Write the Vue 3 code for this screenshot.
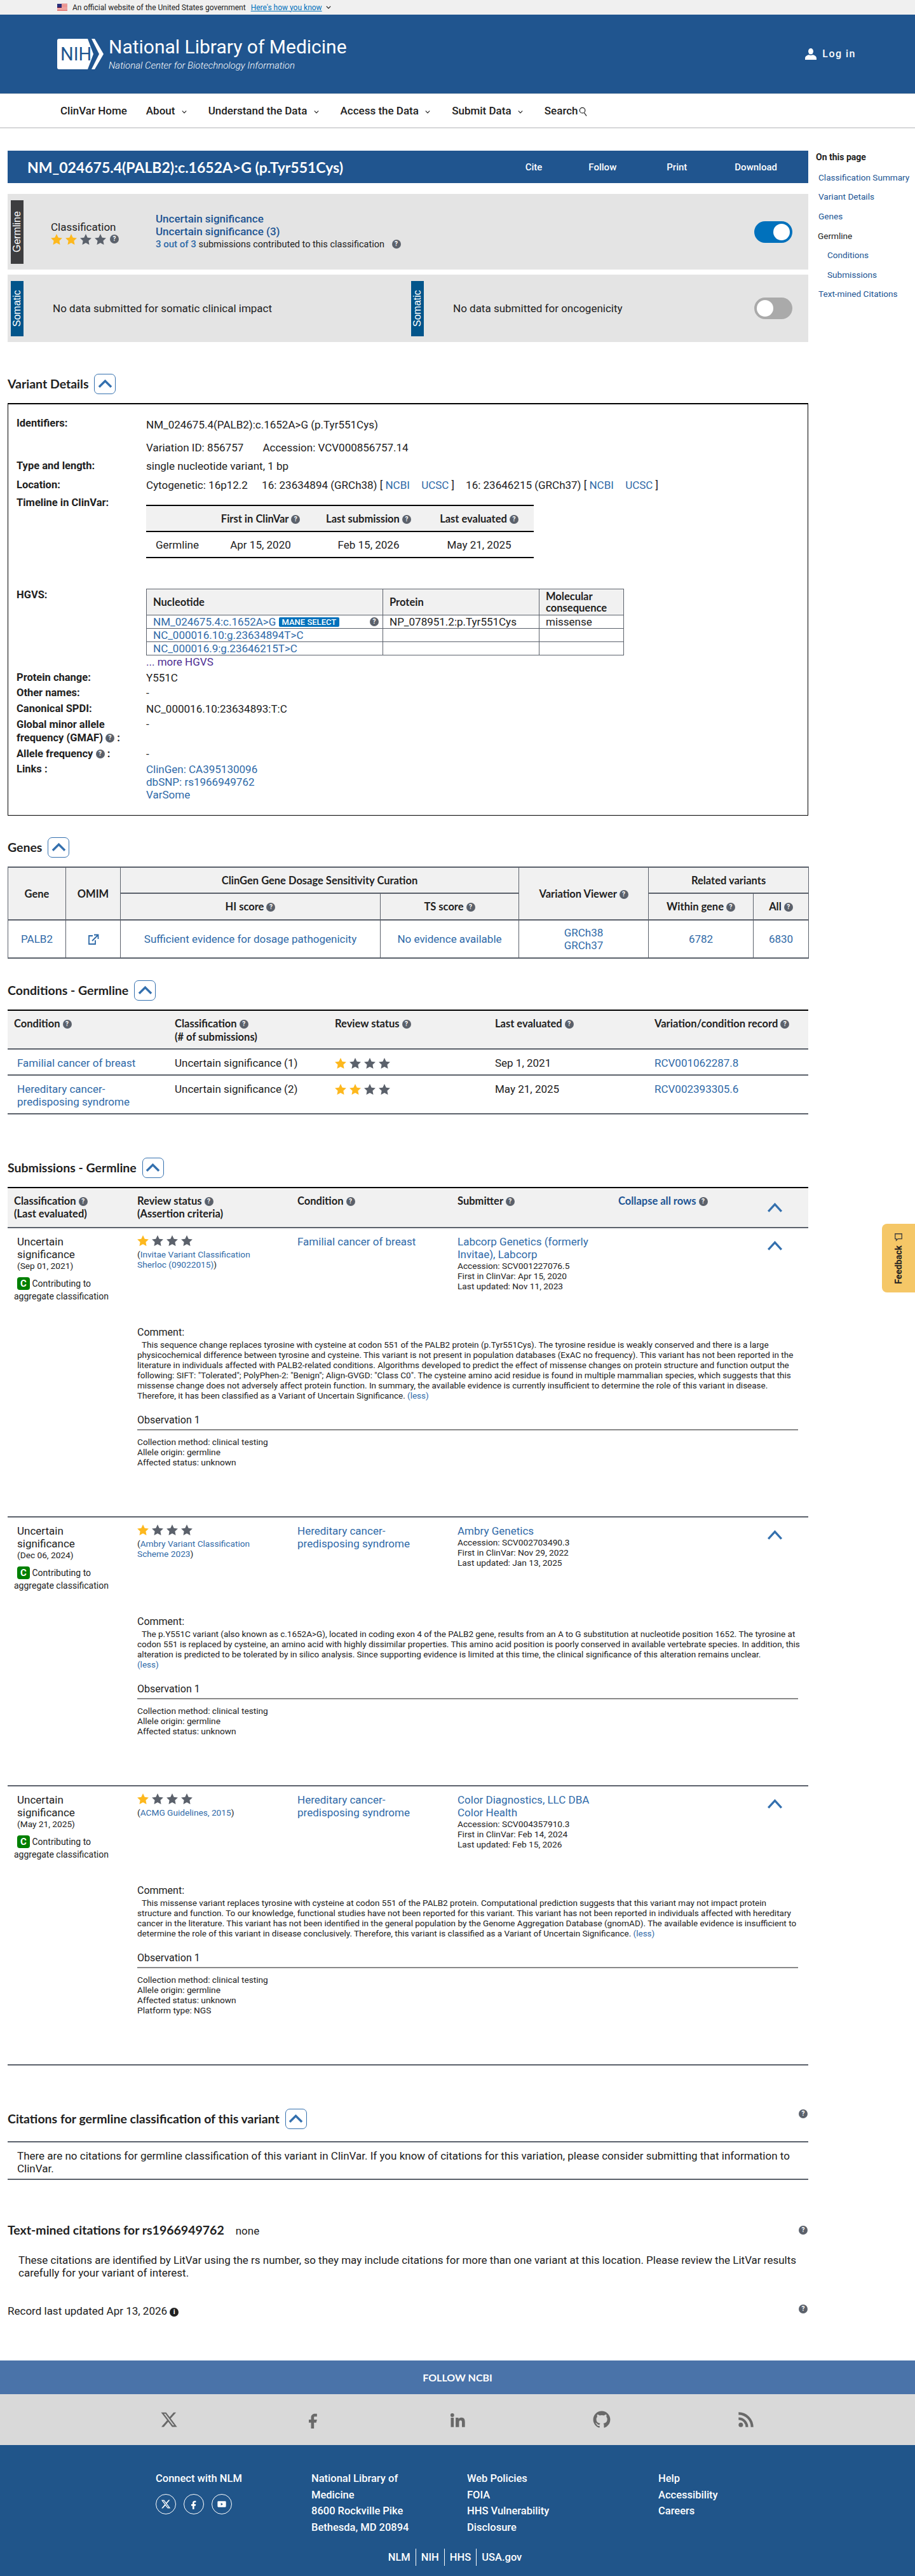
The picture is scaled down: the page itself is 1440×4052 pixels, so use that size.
<template>
  <div class="page">
    <!-- Government banner -->
    <div class="gov-banner">
      <svg class="flag" viewBox="0 0 16 11" width="16" height="11">
        <rect width="16" height="11" fill="#fff" />
        <path d="M0 .5h16M0 2.5h16M0 4.5h16M0 6.5h16M0 8.5h16M0 10.5h16" stroke="#d83933" stroke-width="1" />
        <rect width="7" height="6" fill="#2a2f7a" />
      </svg>
      <span>An official website of the United States government</span>
      <a class="how" href="#">Here's how you know</a>
      <svg class="chev-sm" viewBox="0 0 10 6" width="8" height="5"><path d="M1 1l4 4 4-4" /></svg>
    </div>

    <!-- Header -->
    <header class="site-header">
      <div class="brand">
        <svg class="nih" viewBox="0 0 73 48" width="73" height="48">
          <path d="M3 0h45l9 24-9 24H3a3 3 0 0 1-3-3V3a3 3 0 0 1 3-3z" fill="#fff" />
          <path d="M54 0h5l14 24-14 24h-5l12-24z" fill="#fff" />
          <text x="5" y="34" class="nih-text">NIH</text>
        </svg>
        <div>
          <div class="brand-title">National Library of Medicine</div>
          <div class="brand-sub">National Center for Biotechnology Information</div>
        </div>
      </div>
      <a class="login" href="#">
        <svg viewBox="0 0 18 18" width="18" height="18" fill="#fff">
          <ellipse cx="9" cy="4.8" rx="4" ry="4.8" />
          <path d="M0 18v-2.5C0 12.4 3.4 10.6 6 10.2c1.8 1 4.2 1 6 0 2.6.4 6 2.2 6 5.3V18z" />
        </svg>
        <span>Log in</span>
      </a>
    </header>

    <!-- Nav -->
    <nav class="site-nav">
      <a href="#" class="nav-home">ClinVar Home</a>
      <a v-for="item in navItems" :key="item" href="#">
        {{ item }}
        <svg class="chev-nav" viewBox="0 0 10 6" width="8" height="6"><path d="M1 1l4 4 4-4" /></svg>
      </a>
      <a href="#" class="nav-search">
        Search<svg viewBox="0 0 14 16" width="13" height="15" fill="none" stroke="#212121" stroke-width="1.3">
          <circle cx="6" cy="6" r="4.6" />
          <path d="M9 10l4 5.5" />
        </svg>
      </a>
    </nav>

    <div class="layout">
      <main class="main">
        <div class="title-bar">
          <h1>NM_024675.4(PALB2):c.1652A&gt;G (p.Tyr551Cys)</h1>
          <div class="title-actions">
            <a href="#" class="act-cite">Cite</a>
            <a href="#" class="act-follow">Follow</a>
            <a href="#" class="act-print">Print</a>
            <a href="#" class="act-download">Download</a>
          </div>
        </div>

        <!-- Classification summary -->
        <section class="panel germline">
          <div class="side-tag dark">Germline</div>
          <div class="cls">
            <div class="cls-label">Classification</div>
            <div class="cls-stars">
              <span class="stars">
                <svg v-for="n in 4" :key="n" viewBox="0 0 20 19" :class="n <= 2 ? 'on' : 'off'"><path :d="starPath" /></svg>
              </span>
              <span class="help">?</span>
            </div>
          </div>
          <div class="cls-detail">
            <a href="#" class="strong-link">Uncertain significance</a>
            <a href="#" class="strong-link">Uncertain significance (3)</a>
            <div class="cls-count">
              <a href="#">3 out of 3</a> submissions contributed to this classification
              <span class="help gap-help">?</span>
            </div>
          </div>
          <div class="toggle on"><span></span></div>
        </section>

        <section class="panel somatic">
          <div class="half">
            <div class="side-tag teal">Somatic</div>
            <p>No data submitted for somatic clinical impact</p>
          </div>
          <div class="half">
            <div class="side-tag teal">Somatic</div>
            <p>No data submitted for oncogenicity</p>
            <div class="toggle"><span></span></div>
          </div>
        </section>

        <!-- Variant details -->
        <div class="sec-head first">
          <h2>Variant Details</h2>
          <button class="collapse" type="button"><svg viewBox="0 0 24 14"><path d="M2 12L12 2l10 10" /></svg></button>
        </div>
        <div class="details-box">
          <div class="row row-ident">
            <div class="lbl">Identifiers:</div>
            <div class="val">
              <div>NM_024675.4(PALB2):c.1652A&gt;G (p.Tyr551Cys)</div>
              <div class="val-gap">Variation ID: 856757 <span class="accession">Accession: VCV000856757.14</span></div>
            </div>
          </div>
          <div class="row row-type">
            <div class="lbl">Type and length:</div>
            <div class="val">single nucleotide variant, 1 bp</div>
          </div>
          <div class="row row-loc">
            <div class="lbl">Location:</div>
            <div class="val">
              Cytogenetic: 16p12.2 <span class="loc-part">16: 23634894 (GRCh38) [ <a href="#">NCBI</a> <a href="#" class="ucsc">UCSC</a> ]</span>
              <span class="loc-part">16: 23646215 (GRCh37) [ <a href="#">NCBI</a> <a href="#" class="ucsc">UCSC</a> ]</span>
            </div>
          </div>
          <div class="row row-time">
            <div class="lbl">Timeline in ClinVar:</div>
            <div class="val">
              <table class="timeline">
                <thead>
                  <tr>
                    <th class="t1"></th>
                    <th class="t2">First in ClinVar <span class="help">?</span></th>
                    <th class="t3">Last submission <span class="help">?</span></th>
                    <th class="t4">Last evaluated <span class="help">?</span></th>
                  </tr>
                </thead>
                <tbody>
                  <tr>
                    <td class="left">Germline</td>
                    <td>Apr 15, 2020</td>
                    <td>Feb 15, 2026</td>
                    <td>May 21, 2025</td>
                  </tr>
                </tbody>
              </table>
            </div>
          </div>
          <div class="row row-hgvs">
            <div class="lbl">HGVS:</div>
            <div class="val">
              <table class="hgvs">
                <thead>
                  <tr>
                    <th class="col-nuc">Nucleotide</th>
                    <th class="col-prot">Protein</th>
                    <th>Molecular consequence</th>
                  </tr>
                </thead>
                <tbody>
                  <tr>
                    <td>
                      <div class="hgvs-main">
                        <span><a href="#">NM_024675.4:c.1652A&gt;G</a> <span class="mane">MANE SELECT</span></span>
                        <span class="help">?</span>
                      </div>
                    </td>
                    <td>NP_078951.2:p.Tyr551Cys</td>
                    <td>missense</td>
                  </tr>
                  <tr><td><a href="#">NC_000016.10:g.23634894T&gt;C</a></td><td></td><td></td></tr>
                  <tr><td><a href="#">NC_000016.9:g.23646215T&gt;C</a></td><td></td><td></td></tr>
                </tbody>
              </table>
              <a href="#" class="more">... more HGVS</a>
            </div>
          </div>
          <div class="row tight">
            <div class="lbl">Protein change:</div>
            <div class="val">Y551C</div>
          </div>
          <div class="row tight">
            <div class="lbl">Other names:</div>
            <div class="val">-</div>
          </div>
          <div class="row tight">
            <div class="lbl">Canonical SPDI:</div>
            <div class="val">NC_000016.10:23634893:T:C</div>
          </div>
          <div class="row tight">
            <div class="lbl lbl-wrap">Global minor allele frequency (GMAF) <span class="help">?</span> :</div>
            <div class="val">-</div>
          </div>
          <div class="row tight">
            <div class="lbl">Allele frequency <span class="help">?</span> :</div>
            <div class="val">-</div>
          </div>
          <div class="row tight">
            <div class="lbl">Links :</div>
            <div class="val links">
              <a href="#">ClinGen: CA395130096</a>
              <a href="#">dbSNP: rs1966949762</a>
              <a href="#">VarSome</a>
            </div>
          </div>
        </div>

        <!-- Genes -->
        <div class="sec-head">
          <h2>Genes</h2>
          <button class="collapse" type="button"><svg viewBox="0 0 24 14"><path d="M2 12L12 2l10 10" /></svg></button>
        </div>
        <table class="genes">
          <colgroup>
            <col class="g1" />
            <col class="g2" />
            <col class="g3" />
            <col class="g4" />
            <col class="g5" />
            <col class="g6" />
            <col class="g7" />
          </colgroup>
          <thead>
            <tr class="g-r1">
              <th rowspan="2">Gene</th>
              <th rowspan="2">OMIM</th>
              <th colspan="2">ClinGen Gene Dosage Sensitivity Curation</th>
              <th rowspan="2">Variation Viewer <span class="help">?</span></th>
              <th colspan="2">Related variants</th>
            </tr>
            <tr class="g-r2">
              <th>HI score <span class="help">?</span></th>
              <th>TS score <span class="help">?</span></th>
              <th>Within gene <span class="help">?</span></th>
              <th>All <span class="help">?</span></th>
            </tr>
          </thead>
          <tbody>
            <tr class="g-r3">
              <td><a href="#">PALB2</a></td>
              <td>
                <svg class="ext" viewBox="0 0 18 17" width="18" height="17" fill="none" stroke="#2f6aa8" stroke-width="1.8">
                  <path d="M8 3H2v13h10v-6" />
                  <path d="M7 11L16 2M10 1.5h6.5V8" />
                </svg>
              </td>
              <td><a href="#">Sufficient evidence for dosage pathogenicity</a></td>
              <td><a href="#">No evidence available</a></td>
              <td class="stack"><a href="#">GRCh38</a><a href="#">GRCh37</a></td>
              <td><a href="#">6782</a></td>
              <td><a href="#">6830</a></td>
            </tr>
          </tbody>
        </table>

        <!-- Conditions -->
        <div class="sec-head">
          <h2>Conditions - Germline</h2>
          <button class="collapse" type="button"><svg viewBox="0 0 24 14"><path d="M2 12L12 2l10 10" /></svg></button>
        </div>
        <div class="cond-table">
          <div class="cond-row cond-head">
            <div>Condition <span class="help">?</span></div>
            <div>Classification <span class="help">?</span><br />(# of submissions)</div>
            <div>Review status <span class="help">?</span></div>
            <div>Last evaluated <span class="help">?</span></div>
            <div>Variation/condition record <span class="help">?</span></div>
          </div>
          <div v-for="c in conditions" :key="c.record" class="cond-row">
            <div class="cond-name"><a href="#">{{ c.name }}</a></div>
            <div>{{ c.classification }}</div>
            <div>
              <span class="stars cond-stars">
                <svg v-for="n in 4" :key="n" viewBox="0 0 20 19" :class="n <= c.stars ? 'on' : 'off'"><path :d="starPath" /></svg>
              </span>
            </div>
            <div>{{ c.evaluated }}</div>
            <div><a href="#">{{ c.record }}</a></div>
          </div>
        </div>

        <!-- Submissions -->
        <div class="sec-head wide">
          <h2>Submissions - Germline</h2>
          <button class="collapse" type="button"><svg viewBox="0 0 24 14"><path d="M2 12L12 2l10 10" /></svg></button>
        </div>
        <div class="sub-table">
          <div class="sub-grid sub-head">
            <div>Classification <span class="help">?</span><br />(Last evaluated)</div>
            <div>Review status <span class="help">?</span><br />(Assertion criteria)</div>
            <div>Condition <span class="help">?</span></div>
            <div>Submitter <span class="help">?</span></div>
            <div><a href="#">Collapse all rows</a> <span class="help">?</span></div>
            <div class="chev-cell"><svg class="chev-big" viewBox="0 0 26 16"><path d="M2 14.5L13 2.5l11 12" /></svg></div>
          </div>
          <article v-for="s in submissions" :key="s.accession" class="sub-row">
            <div class="sub-grid sub-top">
              <div class="sub-cls">
                <div class="sub-sig">Uncertain significance</div>
                <div class="small">({{ s.date }})</div>
                <div class="contrib"><span class="c-badge">C</span> Contributing to aggregate classification</div>
              </div>
              <div>
                <span class="stars">
                  <svg v-for="n in 4" :key="n" viewBox="0 0 20 19" :class="n === 1 ? 'on' : 'off'"><path :d="starPath" /></svg>
                </span>
                <div class="small criteria">(<a href="#">{{ s.criteria }}</a>)</div>
              </div>
              <div class="sub-link"><a href="#">{{ s.condition }}</a></div>
              <div>
                <div class="sub-link"><a href="#">{{ s.submitter }}</a></div>
                <div class="small">Accession: {{ s.accession }}</div>
                <div class="small">First in ClinVar: {{ s.first }}</div>
                <div class="small">Last updated: {{ s.updated }}</div>
              </div>
              <div></div>
              <div class="chev-cell"><svg class="chev-big" viewBox="0 0 26 16"><path d="M2 14.5L13 2.5l11 12" /></svg></div>
            </div>
            <div class="sub-more">
              <div class="comment-title">Comment:</div>
              <p class="comment">{{ s.comment }} <br v-if="s.lessOnNewLine" /><a href="#">(less)</a></p>
              <div class="obs-title">Observation 1</div>
              <div class="obs-list">
                <div v-for="line in s.observation" :key="line">{{ line }}</div>
              </div>
            </div>
          </article>
        </div>

        <!-- Citations -->
        <div class="sec-head wide with-help">
          <div class="sec-left">
            <h2>Citations for germline classification of this variant</h2>
            <button class="collapse" type="button"><svg viewBox="0 0 24 14"><path d="M2 12L12 2l10 10" /></svg></button>
          </div>
          <span class="help help-up">?</span>
        </div>
        <div class="no-cite">
          There are no citations for germline classification of this variant in ClinVar. If you know of citations for this variation, please consider submitting that information to ClinVar.
        </div>

        <div class="mined-head">
          <div><h2>Text-mined citations for rs1966949762</h2><span class="none">none</span></div>
          <span class="help">?</span>
        </div>
        <p class="mined-text">
          These citations are identified by LitVar using the rs number, so they may include citations for more than one variant at this location. Please review the LitVar results carefully for your variant of interest.
        </p>
        <div class="record">
          <div>Record last updated Apr 13, 2026 <span class="info">i</span></div>
          <span class="help">?</span>
        </div>
      </main>

      <aside class="toc">
        <div class="toc-title">On this page</div>
        <a href="#">Classification Summary</a>
        <a href="#">Variant Details</a>
        <a href="#">Genes</a>
        <div class="toc-plain">Germline</div>
        <a href="#" class="indent">Conditions</a>
        <a href="#" class="indent">Submissions</a>
        <a href="#">Text-mined Citations</a>
      </aside>
    </div>

    <!-- Follow NCBI -->
    <footer>
      <div class="follow-title">FOLLOW NCBI</div>
      <div class="follow-icons">
        <a href="#"><svg viewBox="0 0 24 24"><path :d="xPath" /></svg></a>
        <a href="#"><svg viewBox="0 0 24 24"><path :d="fbPath" /></svg></a>
        <a href="#"><svg viewBox="0 0 24 24"><path d="M4.98 3.5a2.5 2.5 0 1 1 0 5 2.5 2.5 0 0 1 0-5zM3 9.5h4V22H3zM9.5 9.5h3.8v1.7c.6-1 1.9-2 3.9-2 4.1 0 4.8 2.7 4.8 6.2V22h-4v-5.9c0-1.3 0-3-1.8-3s-2.1 1.4-2.1 2.9v6H9.5z" /></svg></a>
        <a href="#"><svg viewBox="0 0 24 24"><path :d="githubPath" /></svg></a>
        <a href="#"><svg viewBox="0 0 24 24"><circle cx="5" cy="19" r="3" /><path d="M2 9v3.5a9.5 9.5 0 0 1 9.5 9.5H15A13 13 0 0 0 2 9zM2 2v3.5A16.5 16.5 0 0 1 18.5 22H22A20 20 0 0 0 2 2z" /></svg></a>
      </div>
      <div class="foot-main">
        <div class="foot-cols">
          <div>
            <div>Connect with NLM</div>
            <div class="foot-social">
              <a href="#"><svg viewBox="0 0 24 24"><path :d="xPath" /></svg></a>
              <a href="#"><svg viewBox="0 0 24 24"><path :d="fbPath" /></svg></a>
              <a href="#"><svg viewBox="0 0 24 24"><path d="M4 5h16a2 2 0 0 1 2 2v10a2 2 0 0 1-2 2H4a2 2 0 0 1-2-2V7a2 2 0 0 1 2-2zm6 4v6l5-3z" fill-rule="evenodd" /></svg></a>
            </div>
          </div>
          <div class="addr">National Library of Medicine<br />8600 Rockville Pike<br />Bethesda, MD 20894</div>
          <div class="foot-links narrow">
            <a href="#">Web Policies</a>
            <a href="#">FOIA</a>
            <a href="#">HHS Vulnerability Disclosure</a>
          </div>
          <div class="foot-links">
            <a href="#">Help</a>
            <a href="#">Accessibility</a>
            <a href="#">Careers</a>
          </div>
        </div>
        <div class="foot-bottom">
          <a href="#">NLM</a>
          <a href="#">NIH</a>
          <a href="#">HHS</a>
          <a href="#">USA.gov</a>
        </div>
      </div>
    </footer>

    <!-- Feedback tab floats over the page edge -->
    <button class="feedback" type="button">
      <svg viewBox="0 0 16 16" width="14" height="14" fill="none" stroke="#3d3d3d" stroke-width="1.5">
        <path d="M2 2h12v9H7l-3 3v-3H2z" />
      </svg>
      <span>Feedback</span>
    </button>
  </div>
</template>

<script setup>
const starPath = 'M10 0l3 6.3 7 .9-5.1 4.8 1.3 7L10 15.6 3.8 19l1.3-7L0 7.2l7-.9z'
const xPath = 'M18.244 2.25h3.308l-7.227 8.26 8.502 11.24H16.17l-5.214-6.817L4.99 21.75H1.68l7.73-8.835L1.254 2.25H8.08l4.713 6.231zm-1.161 17.52h1.833L7.084 4.126H5.117z'
const fbPath = 'M14 8h3V4h-3c-2.8 0-5 2.2-5 5v3H6v4h3v8h4v-8h3l1-4h-4V9c0-.6.4-1 1-1z'
const githubPath = 'M12 .5C5.65.5.5 5.65.5 12c0 5.09 3.29 9.4 7.86 10.93.58.1.79-.25.79-.56v-2c-3.2.7-3.87-1.54-3.87-1.54-.52-1.33-1.28-1.69-1.28-1.69-1.05-.72.08-.7.08-.7 1.16.08 1.77 1.19 1.77 1.19 1.03 1.76 2.7 1.25 3.36.96.1-.75.4-1.25.73-1.54-2.55-.29-5.24-1.28-5.24-5.69 0-1.26.45-2.29 1.19-3.1-.12-.29-.52-1.46.11-3.05 0 0 .97-.31 3.17 1.18a11 11 0 0 1 5.78 0c2.2-1.49 3.17-1.18 3.17-1.18.63 1.59.23 2.76.11 3.05.74.81 1.19 1.84 1.19 3.1 0 4.42-2.69 5.39-5.25 5.68.41.36.78 1.06.78 2.14v3.17c0 .31.21.67.8.56A11.5 11.5 0 0 0 23.5 12C23.5 5.65 18.35.5 12 .5z'

const navItems = ['About', 'Understand the Data', 'Access the Data', 'Submit Data']

const conditions = [
  {
    name: 'Familial cancer of breast',
    classification: 'Uncertain significance (1)',
    stars: 1,
    evaluated: 'Sep 1, 2021',
    record: 'RCV001062287.8',
  },
  {
    name: 'Hereditary cancer-predisposing syndrome',
    classification: 'Uncertain significance (2)',
    stars: 2,
    evaluated: 'May 21, 2025',
    record: 'RCV002393305.6',
  },
]

const baseObservation = ['Collection method: clinical testing', 'Allele origin: germline', 'Affected status: unknown']

const submissions = [
  {
    date: 'Sep 01, 2021',
    criteria: 'Invitae Variant Classification Sherloc (09022015)',
    condition: 'Familial cancer of breast',
    submitter: 'Labcorp Genetics (formerly Invitae), Labcorp',
    accession: 'SCV001227076.5',
    first: 'Apr 15, 2020',
    updated: 'Nov 11, 2023',
    comment:
      'This sequence change replaces tyrosine with cysteine at codon 551 of the PALB2 protein (p.Tyr551Cys). The tyrosine residue is weakly conserved and there is a large physicochemical difference between tyrosine and cysteine. This variant is not present in population databases (ExAC no frequency). This variant has not been reported in the literature in individuals affected with PALB2-related conditions. Algorithms developed to predict the effect of missense changes on protein structure and function output the following: SIFT: "Tolerated"; PolyPhen-2: "Benign"; Align-GVGD: "Class C0". The cysteine amino acid residue is found in multiple mammalian species, which suggests that this missense change does not adversely affect protein function. In summary, the available evidence is currently insufficient to determine the role of this variant in disease. Therefore, it has been classified as a Variant of Uncertain Significance.',
    observation: baseObservation,
  },
  {
    date: 'Dec 06, 2024',
    criteria: 'Ambry Variant Classification Scheme 2023',
    condition: 'Hereditary cancer-predisposing syndrome',
    submitter: 'Ambry Genetics',
    accession: 'SCV002703490.3',
    first: 'Nov 29, 2022',
    updated: 'Jan 13, 2025',
    comment:
      'The p.Y551C variant (also known as c.1652A>G), located in coding exon 4 of the PALB2 gene, results from an A to G substitution at nucleotide position 1652. The tyrosine at codon 551 is replaced by cysteine, an amino acid with highly dissimilar properties. This amino acid position is poorly conserved in available vertebrate species. In addition, this alteration is predicted to be tolerated by in silico analysis. Since supporting evidence is limited at this time, the clinical significance of this alteration remains unclear.',
    lessOnNewLine: true,
    observation: baseObservation,
  },
  {
    date: 'May 21, 2025',
    criteria: 'ACMG Guidelines, 2015',
    condition: 'Hereditary cancer-predisposing syndrome',
    submitter: 'Color Diagnostics, LLC DBA Color Health',
    accession: 'SCV004357910.3',
    first: 'Feb 14, 2024',
    updated: 'Feb 15, 2026',
    comment:
      'This missense variant replaces tyrosine with cysteine at codon 551 of the PALB2 protein. Computational prediction suggests that this variant may not impact protein structure and function. To our knowledge, functional studies have not been reported for this variant. This variant has not been reported in individuals affected with hereditary cancer in the literature. This variant has not been identified in the general population by the Genome Aggregation Database (gnomAD). The available evidence is insufficient to determine the role of this variant in disease conclusively. Therefore, this variant is classified as a Variant of Uncertain Significance.',
    observation: [...baseObservation, 'Platform type: NGS'],
  },
]
</script>

<style>
body {
  margin: 0;
  background: #fff;
}
</style>

<style scoped>
.page {
  position: relative;
  width: 1440px;
  height: 4052px;
  overflow: hidden;
  font-family: Roboto, 'Liberation Sans', sans-serif;
  font-size: 17px;
  line-height: 20px;
  color: #212121;
}

a {
  color: #2f6aa8;
  text-decoration: none;
}

h1,
h2,
p {
  margin: 0;
}

/* Top bars */
.gov-banner {
  display: flex;
  align-items: center;
  height: 23px;
  padding-left: 90px;
  background: #f0f0f0;
  font-size: 12px;
  color: #212121;
}

.flag {
  margin-right: 8px;
}

.how {
  margin-left: 8px;
  color: #0071bc;
  text-decoration: underline;
}

.chev-sm {
  margin-left: 6px;
  fill: none;
  stroke: #212121;
  stroke-width: 1.6;
}

.site-header {
  display: flex;
  align-items: center;
  justify-content: space-between;
  box-sizing: border-box;
  height: 125px;
  padding: 0 93px 0 90px;
  background: #20558f;
  border-bottom: 1px solid #d6d7d9;
}

.brand {
  display: flex;
  align-items: center;
  gap: 8px;
  color: #fff;
}

.nih-text {
  font-family: Roboto, sans-serif;
  font-size: 29px;
  fill: #20558f;
}

.brand-title {
  font-size: 30px;
  line-height: 34px;
}

.brand-sub {
  margin-top: 2px;
  font-size: 15px;
  font-style: italic;
  font-weight: 300;
  line-height: 20px;
}

.login {
  display: flex;
  align-items: center;
  gap: 9px;
  color: #fff;
  font-size: 16px;
  font-weight: 500;
  letter-spacing: 1.5px;
}

.site-nav {
  display: flex;
  align-items: center;
  box-sizing: border-box;
  height: 54px;
  padding-left: 95px;
  border-bottom: 2px solid #d6d7d9;
}

.site-nav a {
  padding-right: 34px;
  color: #212121;
  font-weight: 500;
}

.site-nav .nav-home {
  padding-right: 30px;
}

.chev-nav {
  margin-left: 6px;
  fill: none;
  stroke: #212121;
  stroke-width: 1.4;
  vertical-align: middle;
}

.nav-search svg {
  margin-left: 1px;
  vertical-align: -3px;
}

.layout {
  display: flex;
}

.main {
  width: 1260px;
  margin-left: 12px;
  padding-top: 35px;
}

/* Title bar */
.title-bar {
  display: flex;
  align-items: center;
  height: 51px;
  padding-left: 31px;
  background: #20558f;
  color: #fff;
}

.title-bar h1 {
  font-family: Lato, sans-serif;
  font-size: 23px;
  font-weight: 700;
}

.title-actions {
  display: flex;
  flex: 1;
  height: 20px;
}

.title-actions a {
  color: #fff;
  font-size: 15px;
  font-weight: 500;
}

.act-cite {
  margin-left: auto;
}

.act-follow {
  margin-left: 73px;
}

.act-print {
  margin-left: 79px;
}

.act-download {
  margin-left: 75px;
  margin-right: 49px;
}

/* Classification panels */
.panel {
  display: flex;
  background: #e4e4e4;
}

.germline {
  align-items: center;
  height: 119px;
  margin-top: 17px;
}

.side-tag {
  display: flex;
  align-items: center;
  justify-content: center;
  flex: none;
  width: 20px;
  margin-left: 5px;
  font-family: 'Liberation Sans', Arial, sans-serif;
  font-size: 16px;
  color: #fff;
  writing-mode: vertical-rl;
  transform: rotate(180deg);
}

.side-tag.dark {
  height: 100px;
  background: #3d3d3f;
}

.side-tag.teal {
  height: 87px;
  background: #02558b;
}

.cls {
  width: 165px;
  margin-left: 43px;
  margin-top: 2px;
}

.cls-stars {
  display: flex;
  align-items: center;
  gap: 6px;
  margin-top: 1px;
}

.stars {
  display: inline-flex;
  gap: 5px;
  vertical-align: top;
}

.stars svg {
  width: 18px;
  height: 17px;
}

.stars .on {
  fill: #fdb81e;
}

.stars .off {
  fill: #5b616b;
}

.cond-stars {
  margin-top: 2px;
}

.help {
  display: inline-block;
  width: 14px;
  height: 14px;
  border-radius: 50%;
  background: #5b616b;
  color: #fff;
  font-family: Roboto, sans-serif;
  font-size: 10px;
  font-weight: 700;
  line-height: 14px;
  text-align: center;
  vertical-align: 2px;
}

.cls-detail {
  display: flex;
  flex-direction: column;
  flex: 1;
}

.strong-link {
  color: #205493;
  font-weight: 500;
}

.cls-count {
  font-size: 14.5px;
}

.cls-count a {
  font-size: 15px;
  font-weight: 500;
}

.gap-help {
  margin-left: 8px;
}

.toggle {
  position: relative;
  flex: none;
  width: 60px;
  height: 34px;
  margin-right: 25px;
  border-radius: 17px;
  background: #aaa;
}

.toggle span {
  position: absolute;
  top: 4px;
  left: 4px;
  width: 26px;
  height: 26px;
  border-radius: 50%;
  background: #fff;
}

.toggle.on {
  background: #0071bc;
}

.toggle.on span {
  left: 30px;
}

.somatic {
  align-items: center;
  height: 106px;
  margin-top: 8px;
}

.half {
  display: flex;
  align-items: center;
  width: 630px;
}

.half + .half {
  flex: 1;
}

.half p {
  flex: 1;
  margin-left: 46px;
}

/* Section headings */
.sec-head {
  display: flex;
  align-items: center;
  gap: 9px;
  height: 32px;
  margin-top: 34px;
  margin-bottom: 14px;
}

.sec-head.first {
  margin-top: 50px;
}

.sec-head.wide {
  margin-top: 68px;
}

.sec-head h2,
.mined-head h2 {
  font-family: Lato, sans-serif;
  font-size: 19.5px;
  font-weight: 700;
  line-height: 24px;
}

.collapse {
  display: flex;
  align-items: center;
  justify-content: center;
  box-sizing: border-box;
  width: 34px;
  height: 32px;
  padding: 0;
  border: 1px solid #3470ae;
  border-radius: 7px;
  background: #fff;
}

.collapse svg {
  width: 23px;
  height: 14px;
  fill: none;
  stroke: #3470ae;
  stroke-width: 3.5;
}

/* Variant details */
.details-box {
  box-sizing: border-box;
  height: 649px;
  padding-top: 20px;
  border: 1px solid #000;
  border-width: 2px 1px 1px 1px;
}

.row {
  display: grid;
  grid-template-columns: 204px 1fr;
  padding-left: 13px;
}

.lbl {
  font-size: 16.5px;
  font-weight: 700;
}

.lbl-wrap {
  width: 190px;
  line-height: 21px;
}

.row-ident .val {
  padding-top: 2px;
}

.val-gap {
  margin-top: 16px;
}

.accession {
  margin-left: 26px;
}

.row-type {
  margin-top: 9px;
}

.row-loc {
  margin-top: 10px;
}

.loc-part {
  margin-left: 18px;
}

.ucsc {
  margin-left: 14px;
}

.row-time {
  margin-top: 8px;
}

.timeline {
  width: 610px;
  margin-top: 13px;
  border-collapse: collapse;
  table-layout: fixed;
}

.timeline tr {
  height: 41px;
}

.timeline th,
.hgvs th,
.genes th,
.cond-head,
.sub-head {
  font-family: Lato, sans-serif;
  font-size: 16.5px;
  font-weight: 700;
}

.timeline th {
  padding: 0;
  background: #f1f1f1;
  border-top: 2px solid #000;
  border-bottom: 2px solid #000;
}

.timeline td {
  padding: 0;
  border-bottom: 2px solid #000;
  text-align: center;
}

.timeline td.left {
  padding-left: 15px;
  text-align: left;
}

.t1 {
  width: 98px;
}

.t2 {
  width: 164px;
}

.t3 {
  width: 176px;
}

.row-hgvs {
  margin-top: 48px;
}

.hgvs {
  width: 752px;
  border-collapse: collapse;
  table-layout: fixed;
}

.hgvs th,
.hgvs td {
  padding: 0 10px;
  border: 1px solid #5b616b;
  text-align: left;
}

.hgvs thead tr {
  height: 41px;
}

.hgvs th {
  background: #f1f1f1;
  line-height: 18px;
}

.hgvs tbody tr {
  height: 21px;
}

.col-nuc {
  width: 351px;
}

.col-prot {
  width: 225px;
}

.hgvs-main {
  display: flex;
  justify-content: space-between;
  align-items: center;
  margin-right: -4px;
}

.mane {
  display: inline-block;
  padding: 0 5px;
  border-radius: 2px;
  background: #0071bc;
  color: #fff;
  font-size: 13px;
  font-weight: 500;
  line-height: 15px;
  vertical-align: 1px;
}

.more {
  display: block;
  color: #4c2c92;
}

.tight {
  margin-top: 4.5px;
}

.links a {
  display: block;
}

/* Genes table */
.genes {
  width: 1260px;
  border-collapse: collapse;
  table-layout: fixed;
  border-top: 2px solid #5b616b;
  border-bottom: 2px solid #5b616b;
}

.g1 {
  width: 91px;
}

.g2 {
  width: 86px;
}

.g3 {
  width: 409px;
}

.g4 {
  width: 218px;
}

.g5 {
  width: 204px;
}

.g6 {
  width: 165px;
}

.g7 {
  width: 87px;
}

.genes th,
.genes td {
  padding: 0;
  border: 1px solid #5b616b;
  text-align: center;
}

.genes th {
  background: #f1f1f1;
}

.g-r1 {
  height: 41px;
}

.g-r2 {
  height: 42px;
}

.g-r3 {
  height: 60px;
}

.g-r1 th,
.g-r2 th {
  border-bottom-width: 2px;
}

.stack a {
  display: block;
}

.ext {
  vertical-align: -3px;
}

/* Conditions */
.cond-table {
  border-top: 2px solid #000;
}

.cond-row {
  display: grid;
  grid-template-columns: 253px 252px 252px 251px 252px;
  padding: 11px 0 8px 10px;
  border-bottom: 2px solid #5b616b;
}

.cond-name {
  width: 210px;
  padding-left: 5px;
}

.cond-head {
  height: 42px;
  padding-top: 10px;
  padding-bottom: 7px;
  background: #f1f1f1;
}

.cond-head > div {
  line-height: 21px;
}

/* Submissions */
.sub-table {
  border-top: 2px solid #000;
}

.sub-grid {
  display: grid;
  grid-template-columns: 194px 252px 252px 253px 229px 70px;
  box-sizing: border-box;
  padding-left: 10px;
}

.sub-head {
  height: 63px;
  padding-top: 10px;
  background: #f1f1f1;
  border-bottom: 2px solid #5b616b;
}

.sub-head a {
  color: #205493;
}

.sub-head .chev-cell {
  padding-top: 12px;
}

.chev-big {
  width: 25px;
  height: 15px;
  fill: none;
  stroke: #3470ae;
  stroke-width: 3.5;
}

.chev-cell {
  padding: 8px 0 0 5px;
}

.sub-row {
  border-bottom: 2px solid #5b616b;
}

.sub-top {
  height: 154px;
  padding-top: 11px;
}

.sub-cls {
  width: 180px;
}

.sub-sig {
  width: 100px;
  padding-left: 5px;
}

.sub-cls .small {
  padding-left: 5px;
}

.small {
  font-size: 13.7px;
  line-height: 16px;
}

.criteria {
  margin-top: 2px;
  width: 190px;
}

.sub-link {
  width: 215px;
}

.contrib {
  width: 165px;
  margin-top: 10px;
  font-size: 14px;
  line-height: 20px;
}

.c-badge {
  display: inline-block;
  width: 20px;
  height: 20px;
  margin-left: 5px;
  border-radius: 4px;
  background: #008000;
  color: #fff;
  font-size: 15px;
  font-weight: 700;
  line-height: 20px;
  text-align: center;
  vertical-align: top;
}

.sub-more {
  box-sizing: border-box;
  width: 1244px;
  padding: 0 0 77px 204px;
}

.comment-title {
  font-size: 16px;
}

.comment {
  margin: 1px -6px 0 0;
  font-size: 13.5px;
  line-height: 16px;
  text-indent: 7px;
}

.obs-title {
  margin-top: 21px;
  padding-bottom: 4px;
  border-bottom: 2px solid #888;
  font-size: 16px;
}

.obs-list {
  margin-top: 10px;
  font-size: 13.7px;
  line-height: 16px;
}

/* Citations */
.with-help {
  justify-content: space-between;
  margin-bottom: 19px;
}

.sec-left {
  display: flex;
  align-items: center;
  gap: 9px;
}

.help-up {
  margin: -17px 1px 0 0;
}

.no-cite {
  box-sizing: border-box;
  height: 61px;
  padding: 11px 15px 0;
  border-top: 2px solid #5b616b;
  border-bottom: 2px solid #5b616b;
}

.mined-head {
  display: flex;
  align-items: center;
  justify-content: space-between;
  height: 32px;
  margin-top: 63px;
  padding-right: 1px;
}

.none {
  margin-left: 18px;
}

.mined-head h2 {
  display: inline;
}

.mined-text {
  margin-top: 21px;
  padding: 0 15px 0 17px;
}

.record {
  display: flex;
  align-items: flex-start;
  justify-content: space-between;
  margin-top: 40px;
  padding-right: 1px;
}

.info {
  display: inline-block;
  width: 14px;
  height: 14px;
  border-radius: 50%;
  background: #212121;
  color: #fff;
  font-size: 11px;
  font-weight: 700;
  line-height: 14px;
  text-align: center;
  vertical-align: 1px;
}

/* On this page */
.toc {
  display: flex;
  flex-direction: column;
  align-items: flex-start;
  padding-top: 35px;
  margin-left: 12px;
  font-size: 13.6px;
  line-height: 20px;
}

.toc-title {
  font-size: 14px;
  font-weight: 700;
}

.toc a {
  margin: 10.4px 0 0 4px;
  color: #205493;
}

.toc-title + a {
  margin-top: 12px;
}

.toc a.indent {
  margin-left: 18px;
}

.toc-plain {
  margin: 11px 0 0 3px;
}

/* Footer */
.follow-title {
  margin-top: 68px;
  height: 53px;
  background: #4a73a9;
  color: #fff;
  font-family: Lato, sans-serif;
  font-size: 16px;
  font-weight: 700;
  line-height: 53px;
  text-align: center;
}

.follow-icons {
  display: flex;
  justify-content: space-between;
  align-items: center;
  height: 80px;
  padding: 0 252px;
  background: #d9d9d9;
}

.follow-icons svg {
  display: block;
  width: 28px;
  height: 28px;
  fill: #696969;
}

.foot-main {
  box-sizing: border-box;
  height: 208px;
  padding-top: 40px;
  background: #20558a;
  color: #fff;
  font-size: 16.5px;
  font-weight: 500;
  line-height: 25.5px;
}

.foot-main a {
  color: #fff;
}

.foot-cols {
  display: grid;
  grid-template-columns: 245px 245px 301px 1fr;
  padding-left: 245px;
}

.foot-social {
  display: flex;
  gap: 12px;
  margin-top: 11px;
}

.foot-social a {
  display: flex;
  align-items: center;
  justify-content: center;
  box-sizing: border-box;
  width: 32px;
  height: 32px;
  border: 1px solid #fff;
  border-radius: 50%;
}

.foot-social svg {
  width: 16px;
  height: 16px;
  fill: #fff;
}

.addr {
  width: 200px;
}

.foot-links a {
  display: block;
}

.narrow a {
  width: 170px;
}

.foot-bottom {
  display: flex;
  justify-content: center;
  margin-top: 21px;
  margin-left: -8px;
}

.foot-bottom a {
  height: 27px;
  padding: 0 8px;
  line-height: 27px;
  border-left: 1px solid #fff;
}

.foot-bottom a:first-child {
  border-left: 0;
}

/* Feedback */
.feedback {
  position: absolute;
  top: 1925px;
  right: 0;
  display: flex;
  align-items: center;
  justify-content: center;
  gap: 6px;
  width: 52px;
  height: 108px;
  padding: 0;
  border: 0;
  border-radius: 8px 0 0 8px;
  background: #f5c767;
  color: #212121;
  font-family: Roboto, sans-serif;
  font-size: 14px;
  font-weight: 700;
  writing-mode: vertical-rl;
}

.feedback span {
  transform: rotate(180deg);
}
</style>
